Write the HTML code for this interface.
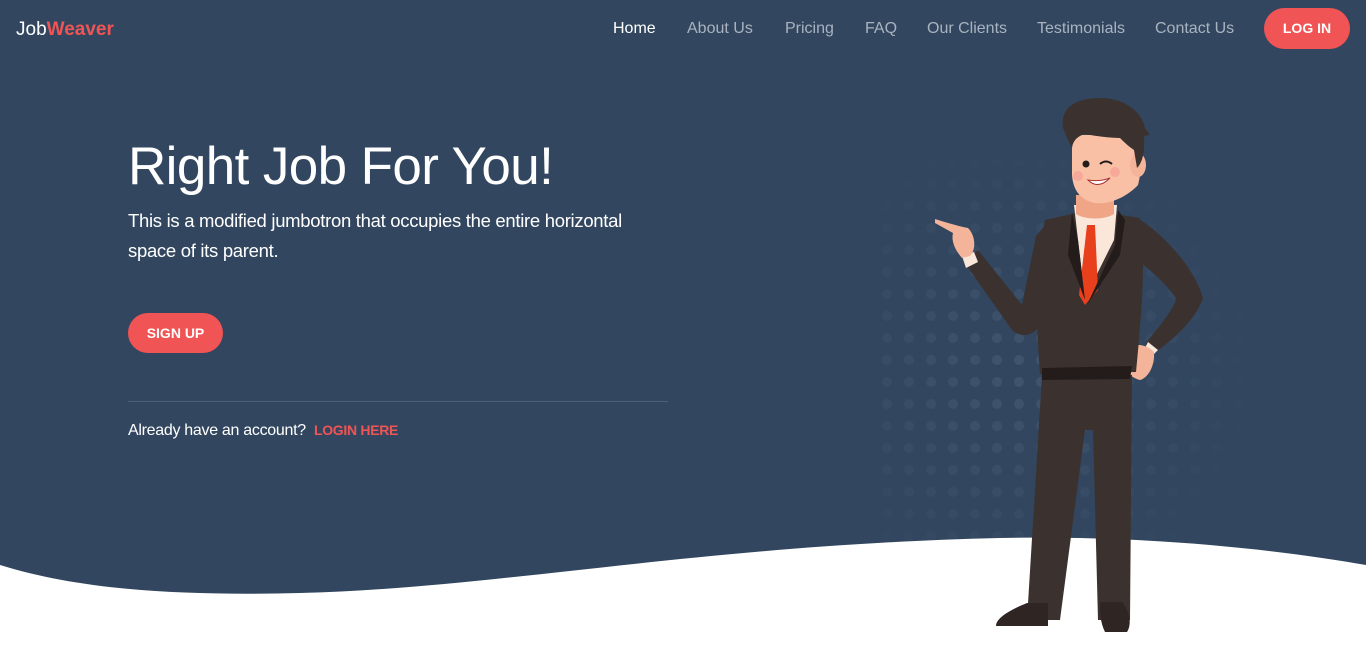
<!DOCTYPE html>
<html><head><meta charset="utf-8"><style>
*{margin:0;padding:0;box-sizing:border-box}
body{width:1366px;height:657px;overflow:hidden;background:#fff;font-family:"Liberation Sans",sans-serif;position:relative}
.hero{position:absolute;left:0;top:0;width:1366px;height:657px}
.logo{position:absolute;left:16px;top:19px;font-size:19px;color:#fff}
.logo b{color:#f05454}
nav{position:absolute;top:20px;left:0;width:1366px}
nav a{position:absolute;color:#a9b3bf;font-size:16px;text-decoration:none}
.login{position:absolute;left:1264px;top:8px;width:86px;height:41px;border-radius:21px;background:#f05454;color:#fff;font-weight:bold;font-size:14px;text-align:center;line-height:41px}
h1{position:absolute;left:128px;top:136px;font-weight:normal;font-size:53px;color:#fff;letter-spacing:-0.6px;white-space:nowrap}
.lead{position:absolute;left:128px;top:206px;width:540px;color:#fff;font-size:18.5px;line-height:30px;letter-spacing:-0.3px}
.signup{position:absolute;left:128px;top:313px;width:95px;height:40px;border-radius:20px;background:#f05454;color:#fff;font-weight:bold;font-size:14px;text-align:center;line-height:40px}
.hr{position:absolute;left:128px;top:401px;width:540px;height:1px;background:#4b5e74}
.acc{position:absolute;left:128px;top:422px;color:#fff;font-size:16px;letter-spacing:-0.3px}
.acc b{color:#f05454;font-size:14px;margin-left:4px}
</style></head><body>
<svg class="hero" width="1366" height="657" viewBox="0 0 1366 657">
<defs>
<radialGradient id="rg" cx="1020" cy="370" r="240" gradientUnits="userSpaceOnUse">
<stop offset="0" stop-color="#fff" stop-opacity="1"/><stop offset="1" stop-color="#fff" stop-opacity="0"/></radialGradient>
<pattern id="dots" x="876" y="173" width="22" height="22" patternUnits="userSpaceOnUse"><circle cx="11" cy="11" r="5" fill="#5a6f88"/></pattern>
<mask id="m"><rect width="1366" height="657" fill="url(#rg)"/></mask>
</defs>
<rect width="1366" height="657" fill="#32475f"/>
<rect x="870" y="160" width="400" height="400" fill="url(#dots)" mask="url(#m)" opacity="0.35"/>
<path d="M0 565 C80 590 180 596 300 593 C500 588 700 545 1000 538 C1150 535 1280 550 1366 565 L1366 657 L0 657Z" fill="#fff"/>
<g>
<path d="M964 262 L1012 330 C1020 338 1032 336 1038 328 L1058 255 L1048 222 L1036 236 L1022 305 L978 250Z" fill="#3b3230"/>
<path d="M962 256 L974 252 L978 262 L966 268Z" fill="#fae7da"/>
<path d="M935 219 C948 223 958 226 968 228 C976 236 976 250 970 256 L962 258 C955 250 951 241 953 233 L935 223Z" fill="#f4b49a"/>
<path d="M1138 218 C1168 238 1195 270 1203 298 C1196 320 1172 340 1156 352 L1145 344 C1160 326 1176 306 1176 298 C1166 284 1150 270 1140 262Z" fill="#3b3230"/>
<path d="M1148 342 L1158 350 L1152 356 L1145 348Z" fill="#fae7da"/>
<path d="M1128 348 C1138 342 1148 346 1154 352 C1155 366 1148 378 1140 380 C1130 378 1120 366 1118 356Z" fill="#f4b49a"/>
<path d="M1042 375 L1132 375 L1130 620 L1098 620 L1093 430 L1085 430 L1060 620 L1027 620Z" fill="#3b3230"/>
<path d="M1027 603 L1048 603 L1048 626 L996 626 C996 618 1010 610 1027 603Z" fill="#2f2624"/>
<path d="M1100 602 L1122 602 C1130 612 1132 624 1127 632 L1105 632 C1100 622 1100 612 1100 602Z" fill="#2f2624"/>
<path d="M1045 220 L1090 210 L1140 218 C1146 260 1142 310 1136 372 L1040 374 C1036 320 1034 270 1045 220Z" fill="#3b3230"/>
<path d="M1042 368 L1132 366 L1130 379 L1042 380Z" fill="#231c1b"/>
<path d="M1074 205 L1117 205 L1114 240 L1085 298 L1078 240Z" fill="#fae7da"/>
<path d="M1087 225 L1095 225 L1098 290 L1085 305 L1079 295Z" fill="#e8401c"/>
<path d="M1072 212 L1078 240 L1085 300 L1068 255Z" fill="#231c1b"/>
<path d="M1118 210 L1115 245 L1087 305 L1120 255 L1125 220Z" fill="#231c1b"/>
<path d="M1076 195 L1114 195 L1114 214 C1105 220 1085 220 1076 214Z" fill="#f0a586"/>
<path d="M1072 135 L1135 135 C1142 150 1142 170 1138 185 C1128 196 1110 205 1095 203 C1080 200 1073 190 1072 175Z" fill="#fac0a5"/>
<ellipse cx="1138" cy="165" rx="8" ry="12" fill="#f4b49a"/>
<circle cx="1086" cy="164" r="3.5" fill="#231c1b"/>
<path d="M1100 164 q6 -5 12 0" stroke="#231c1b" stroke-width="2" fill="none"/>
<path d="M1088 180 q10 10 22 -2 q-10 4 -22 2Z" fill="#fff" stroke="#a33" stroke-width="1"/>
<circle cx="1078" cy="176" r="5" fill="#f39a92" opacity=".6"/><circle cx="1115" cy="172" r="5" fill="#f39a92" opacity=".6"/>
<path d="M1063 128 C1060 108 1075 98 1100 98 C1125 98 1142 112 1145 128 L1150 135 L1144 136 C1145 150 1143 162 1137 168 L1134 150 C1128 146 1124 142 1120 138 C1110 138 1095 136 1085 134 C1078 136 1073 140 1072 148 L1068 140Z" fill="#3b3230"/>
</g>
</svg>
<div class="logo">Job<b>Weaver</b></div>
<nav>
<a style="left:613px;color:#fff">Home</a>
<a style="left:687px">About Us</a>
<a style="left:785px">Pricing</a>
<a style="left:865px">FAQ</a>
<a style="left:927px">Our Clients</a>
<a style="left:1037px">Testimonials</a>
<a style="left:1155px">Contact Us</a>
</nav>
<div class="login">LOG IN</div>
<h1>Right Job For You!</h1>
<div class="lead">This is a modified jumbotron that occupies the entire horizontal space of its parent.</div>
<div class="signup">SIGN UP</div>
<div class="hr"></div>
<div class="acc">Already have an account? <b>LOGIN HERE</b></div>
</body></html>
